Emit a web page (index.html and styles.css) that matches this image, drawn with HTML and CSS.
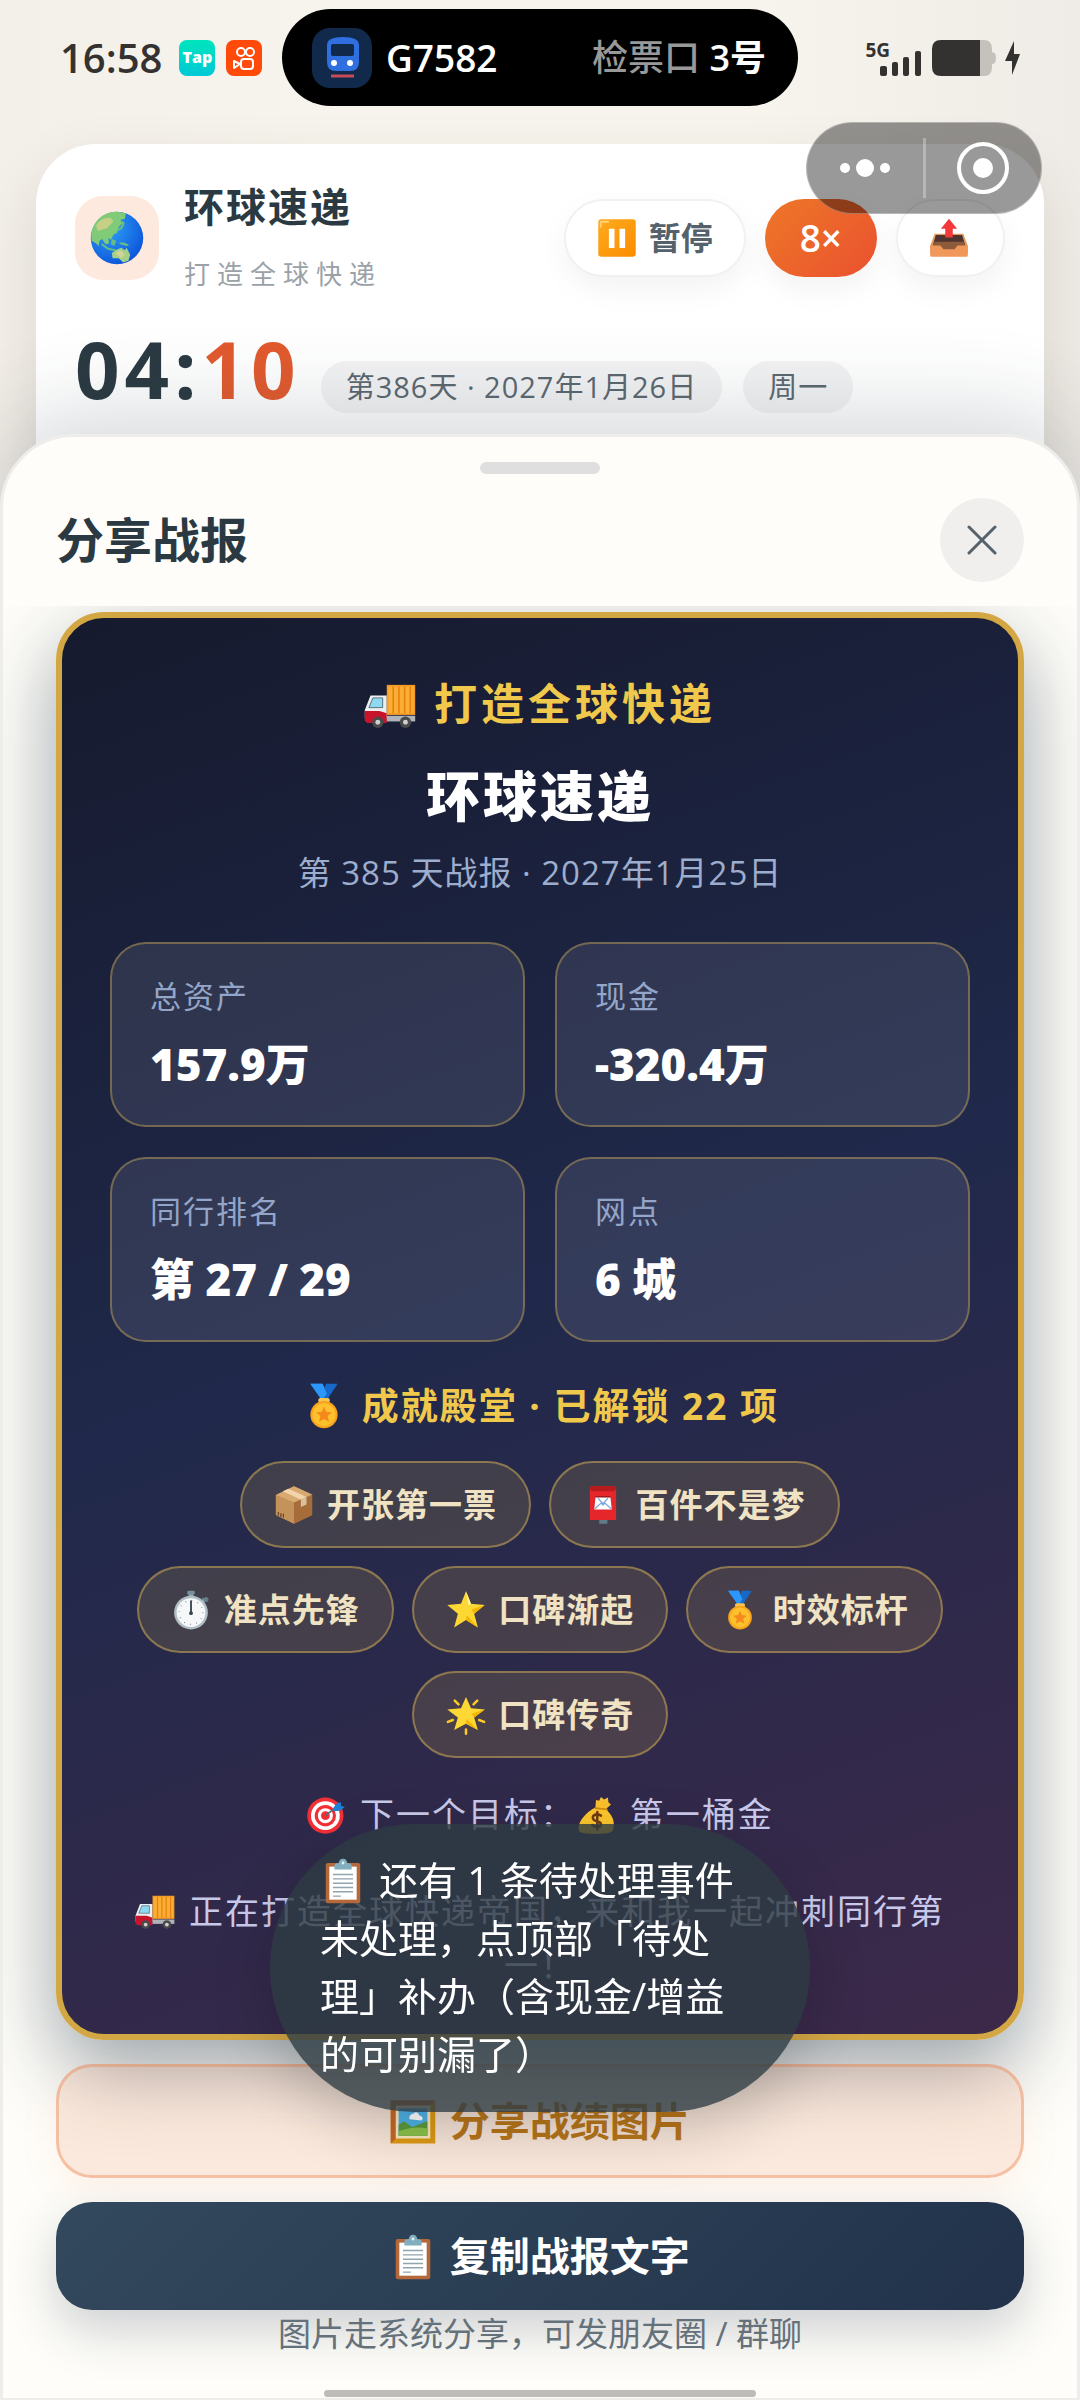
FILE: index.html
```html
<!DOCTYPE html>
<html lang="zh-CN">
<head>
    <meta charset="UTF-8">
    <meta name="viewport" content="width=device-width, initial-scale=1.0">
    <title>环球速递</title>
    <link rel="stylesheet" href="styles.css">
</head>
<body>
    <!-- shared icons -->
    <svg class="sprite" aria-hidden="true">
        <defs>
            <radialGradient id="sea" cx="35%" cy="30%" r="80%">
                <stop offset="0" stop-color="#2fa4f7"/>
                <stop offset="1" stop-color="#0a4fd8"/>
            </radialGradient>
            <linearGradient id="amber" x1="0" y1="0" x2="1" y2="1">
                <stop offset="0" stop-color="#ffab1f"/>
                <stop offset="1" stop-color="#fb8c00"/>
            </linearGradient>
        </defs>
        <symbol id="globe" viewBox="0 0 64 64">
            <circle cx="32" cy="32" r="30" fill="url(#sea)"/>
            <path d="M5 19C10 8 20 2 31 2c4 0 8 1 11 2l-1 6-5 1 2 4-4 4-2 7-4 2-3 6-3-2 1 6-4 1-4-6-3 2-1 6-3-3-5-3C2 29 3 23 5 19z" fill="#7fcb77"/>
            <path d="M8 18c4-7 10-10 17-9l3 4-8 8-10 3z" fill="#c5cf86"/>
            <path d="M38 12l3 3-3 6-4 3-1-2 4-4zM15 38l7 5 9 2-1 2-9-2-7-5zM34 37l6 0 6 3-3 1-7-2zM26 33l5 2-2 6-4-2z" fill="#67bd83"/>
            <path d="M26 49l6-4 5-2 4 3 2-3 4 8-2 7-6 2-5-5-7 0z" fill="#a5d08a"/>
            <path d="M30 49l6-3 5 5-4 4z" fill="#d2d394"/>
        </symbol>
        <symbol id="pause" viewBox="0 0 64 64">
            <rect x="2" y="2" width="60" height="60" rx="5" fill="url(#amber)"/>
            <path d="M6 14V8c0-1 1-2 2-2h10" fill="none" stroke="#ffd27a" stroke-width="3" stroke-linecap="round"/>
            <path d="M19 17h9v31h-9zM36 17h9v31h-9z" fill="#fff"/>
        </symbol>
        <symbol id="outbox" viewBox="0 0 64 64">
            <path d="M9 25h46l7 19v14H2V44z" fill="#e59a5e"/>
            <path d="M11 27h42l5 17H6z" fill="#4e342e"/>
            <path d="M9 38h46l3 6-13 1-4 6H23l-4-6-13-1z" fill="#8d5a3c"/>
            <path d="M2 44h16l5 6h18l5-6h16v16a2 2 0 0 1-2 2H4a2 2 0 0 1-2-2z" fill="#f0985a"/>
            <path d="M32 1l13 16h-7v14H26V17h-7z" fill="#f4373a"/>
        </symbol>
        <symbol id="truck" viewBox="0 0 64 64">
            <path d="M1 37l7-18h20v28H1z" fill="#eceff1"/>
            <path d="M1 38h18l9 3v12H4l-3-3z" fill="#c8142a"/>
            <path d="M6 34l5-12h12v12z" fill="#8fd8f2" stroke="#455a64" stroke-width="1"/>
            <path d="M28 44h35v7H28z" fill="#b0b4b8"/>
            <path d="M28 6h35v37H28z" fill="#f59a23"/>
            <path d="M30 8h31v33H30z" fill="#fbae34"/>
            <path d="M36 8v33M43 8v33M50 8v33M57 8v33" stroke="#e58212" stroke-width="2"/>
            <circle cx="17" cy="52" r="7" fill="#4a4a4a"/>
            <circle cx="17" cy="52" r="3" fill="#d0d0d0"/>
            <circle cx="51" cy="52" r="7" fill="#4a4a4a"/>
            <circle cx="51" cy="52" r="3" fill="#d0d0d0"/>
        </symbol>
        <symbol id="medal" viewBox="0 0 64 64">
            <path d="M13 1h17l8 19-8 5z" fill="#1e88f0"/>
            <path d="M51 1H35l-8 19 8 5z" fill="#1769c9"/>
            <path d="M13 1h17l6 14-7 9z" fill="#2c97fb"/>
            <rect x="24" y="21" width="16" height="7" rx="3" fill="#f6c453"/>
            <circle cx="32" cy="44" r="19" fill="#f9a21b"/>
            <circle cx="32" cy="44" r="16" fill="#ffc02e"/>
            <path d="M32 33l3 7 8 1-6 5 2 8-7-4-7 4 2-8-6-5 8-1z" fill="#f48a1c"/>
        </symbol>
        <symbol id="box" viewBox="0 0 64 64">
            <path d="M3 16L32 2l29 13v33L32 62 3 48z" fill="#b27a45"/>
            <path d="M3 16l29 12v34L3 48z" fill="#c4935c"/>
            <path d="M32 28l29-13v33L32 62z" fill="#a66c3a"/>
            <path d="M3 16L32 2l29 13-29 13z" fill="#d9a972"/>
            <path d="M14 10l9-4 29 13-9 4z" fill="#f3d5ad"/>
            <path d="M43 23l9-4v12l-9 4z" fill="#d9c1a0"/>
            <path d="M7 43l0 6M11 45l0 6M15 46l0 6" stroke="#6d4524" stroke-width="2"/>
        </symbol>
        <symbol id="postbox" viewBox="0 0 64 64">
            <path d="M26 54h13v8H26z" fill="#607d8b"/>
            <path d="M11 6q0-4 4-4h34q4 0 4 4v50H11z" fill="#e5262b"/>
            <path d="M11 6q0-4 4-4h34q4 0 4 4l-3 4H14z" fill="#b71c1c"/>
            <path d="M20 18h24v4H20z" fill="#8e1616"/>
            <path d="M20 20h24l2 19H18z" fill="#fff"/>
            <path d="M19 38l10-9 3 3 3-3 10 9M24 21l8 9 8-9" fill="none" stroke="#7aa7dc" stroke-width="2"/>
        </symbol>
        <symbol id="stopwatch" viewBox="0 0 64 64">
            <path d="M28 5h8v9h-8z" fill="#90a4ae"/>
            <rect x="26" y="1" width="12" height="6" rx="2" fill="#78909c"/>
            <path d="M50 12l6 5-5 5z" fill="#90a4ae"/>
            <circle cx="56" cy="15" r="4" fill="#607d8b"/>
            <circle cx="32" cy="36" r="27" fill="#b0bec5"/>
            <circle cx="32" cy="36" r="23" fill="#f5f7f8"/>
            <circle cx="32" cy="36" r="19" fill="none" stroke="#546e7a" stroke-width="2" stroke-dasharray="1 9"/>
            <path d="M32 18v19" stroke="#37474f" stroke-width="3" stroke-linecap="round"/>
            <circle cx="32" cy="37" r="3" fill="#37474f"/>
        </symbol>
        <symbol id="star" viewBox="0 0 64 64">
            <path d="M32 2l8 20 22 2-17 14 6 22-19-12-19 12 6-22L2 24l22-2z" fill="#fdd835"/>
            <path d="M32 2l8 20-4 3z" fill="#fff59d"/>
            <path d="M62 24L45 38l-4-7zM51 60L32 48l1-8z" fill="#f4b400"/>
        </symbol>
        <symbol id="glow" viewBox="0 0 64 64">
            <path d="M32 3l8 18 22 2-17 13 6 20-19-10-19 10 6-20L2 23l22-2z" fill="#fdd835"/>
            <path d="M62 23L45 36l-4-6zM51 56L32 46l1-8z" fill="#f4b400"/>
            <path d="M14 9l6 6M50 9l-6 6M3 43l8-3M61 43l-8-3M32 55v7" stroke="#ffca28" stroke-width="4" stroke-linecap="round"/>
        </symbol>
        <symbol id="target" viewBox="0 0 64 64">
            <circle cx="31" cy="33" r="29" fill="#f22f35"/>
            <circle cx="31" cy="33" r="23" fill="#fff"/>
            <circle cx="31" cy="33" r="17" fill="#f22f35"/>
            <circle cx="31" cy="33" r="12" fill="#fff"/>
            <circle cx="31" cy="33" r="7" fill="#f22f35"/>
            <path d="M31 33l18-14" stroke="#546e7a" stroke-width="3"/>
            <path d="M44 20l7-8 5 0 0 5 6 2-8 6-9 1z" fill="#1e7fd6"/>
        </symbol>
        <symbol id="money" viewBox="0 0 64 64">
            <path d="M31 20l1-12 5 1 3-6 5 4 6-3 1 8 4 3-9 8z" fill="#fbc02d"/>
            <path d="M31 20h17l3 6C59 34 62 43 60 54c-1 6-8 8-29 8S4 60 4 54c0-13 13-27 27-34z" fill="#fcc62d"/>
            <path d="M31 21l18 2" stroke="#d18a12" stroke-width="3" stroke-linecap="round"/>
            <path d="M40 33c-9-5-16 1-12 6 3 4 12 2 12 8 0 5-8 6-14 1M34 27v28" fill="none" stroke="#6d3b15" stroke-width="4" stroke-linecap="round"/>
        </symbol>
        <symbol id="clipboard" viewBox="0 0 64 64">
            <rect x="8" y="7" width="48" height="56" rx="3" fill="#b5693b"/>
            <path d="M13 12h38v46H13z" fill="#fff"/>
            <path d="M18 23h28M18 29h28M18 35h28M18 41h28M18 47h28M18 53h11" stroke="#90a4ae" stroke-width="2"/>
            <path d="M20 16v-6q1-3 6-3 1-6 6-6t6 6q5 0 6 3v6z" fill="#82aebf"/>
            <circle cx="32" cy="7" r="2" fill="#e8f1f4"/>
        </symbol>
        <symbol id="frame" viewBox="0 0 64 64">
            <path d="M1 2h62v60H1z" fill="#dd9a14"/>
            <path d="M1 2h62l-8 8H9v44l-8 8z" fill="#c5672a"/>
            <path d="M8 9h48v46H8z" fill="#fbe9c0"/>
            <path d="M12 13h40v38H12z" fill="#4fb3e8"/>
            <path d="M27 28q-1-7 6-8 5-4 8 3 7 2 3 7z" fill="#fff"/>
            <path d="M12 36l7-5 12 8 21-8v20H12z" fill="#5c9a3d"/>
            <path d="M12 45q20-8 40-4v10H12z" fill="#8bc34a"/>
        </symbol>
    </svg>

    <div class="status">
        <div class="status-left">
            <span class="time">16:58</span>
            <span class="app app-tap">Tap</span>
            <span class="app app-video">
                <svg viewBox="0 0 36 36" width="36" height="36" fill="none" stroke="#fff" stroke-width="2">
                    <circle cx="15" cy="12" r="4"/>
                    <circle cx="24" cy="12" r="4"/>
                    <rect x="15" y="19" width="12" height="10" rx="3"/>
                    <path d="M8 21l6 3-6 4z" stroke-linejoin="round"/>
                </svg>
            </span>
        </div>
        <div class="island">
            <svg class="train" viewBox="0 0 60 60">
                <rect width="60" height="60" rx="18" fill="#11294a"/>
                <path d="M15 17q0-8 16-8t16 8v17q0 9-9 9H24q-9 0-9-9z" fill="#2f6fe0"/>
                <rect x="19" y="16" width="23" height="12" rx="2" fill="#11294a"/>
                <circle cx="22" cy="35" r="3" fill="#fff"/>
                <circle cx="38" cy="35" r="3" fill="#fff"/>
                <path d="M19 48h23" stroke="#c94a5a" stroke-width="3"/>
            </svg>
            <span class="train-no">G7582</span>
            <span class="gate"><span class="gate-label">检票口</span> 3号</span>
        </div>
        <div class="status-right">
            <span class="net">5G</span>
            <svg class="signal" viewBox="0 0 42 36" width="42" height="36" fill="#343230">
                <rect x="0" y="26" width="7" height="10" rx="2"/>
                <rect x="12" y="22" width="6" height="14" rx="2"/>
                <rect x="23" y="17" width="6" height="19" rx="2"/>
                <rect x="35" y="11" width="6" height="25" rx="2"/>
            </svg>
            <svg viewBox="0 0 64 36" width="64" height="36">
                <path d="M48 0h4q8 0 8 9v3q4 0 4 6t-4 6v3q0 9-8 9h-4z" fill="#c5c2bd"/>
                <path d="M9 0h39v36H9q-9 0-9-9V9q0-9 9-9z" fill="#343230"/>
            </svg>
            <svg class="bolt" viewBox="0 0 15 34" width="15" height="34">
                <path d="M9 0v13h6L7 34V20H0z" fill="#343230"/>
            </svg>
        </div>
    </div>

    <div class="capsule">
        <button class="capsule-btn" type="button" aria-label="更多">
            <svg viewBox="0 0 50 20" width="50" height="20" fill="#fff">
                <circle cx="5" cy="10" r="5"/>
                <circle cx="25" cy="10" r="9"/>
                <circle cx="45" cy="10" r="5"/>
            </svg>
        </button>
        <button class="capsule-btn" type="button" aria-label="关闭小程序">
            <svg viewBox="0 0 52 52" width="52" height="52">
                <circle cx="26" cy="26" r="24" fill="none" stroke="#fff" stroke-width="4"/>
                <circle cx="26" cy="26" r="10" fill="#fff"/>
            </svg>
        </button>
    </div>

    <header class="top-card">
        <div class="brand-row">
            <div class="brand-icon"><svg width="56" height="56"><use href="#globe"/></svg></div>
            <div class="brand-text">
                <h1>环球速递</h1>
                <p>打造全球快递</p>
            </div>
            <div class="controls">
                <button class="ctrl" type="button"><svg class="emoji"><use href="#pause"/></svg> 暂停</button>
                <button class="ctrl ctrl-speed" type="button">8×</button>
                <button class="ctrl" type="button" aria-label="分享"><svg class="emoji"><use href="#outbox"/></svg></button>
            </div>
        </div>
        <div class="clock-row">
            <div class="clock">04:<span>10</span></div>
            <span class="date">第386天 · 2027年1月26日</span>
            <span class="date">周一</span>
        </div>
    </header>

    <section class="sheet">
        <div class="sheet-head">
            <div class="handle"></div>
            <div class="sheet-title">
                <h2>分享战报</h2>
                <button class="close" type="button" aria-label="关闭">
                    <svg viewBox="0 0 30 30" width="30" height="30"><path d="M2 2l26 26M28 2L2 28" stroke="#55626b" stroke-width="3" stroke-linecap="round"/></svg>
                </button>
            </div>
        </div>

        <div class="sheet-body">
            <article class="report">
                <p class="report-brand"><svg class="emoji emoji-lg"><use href="#truck"/></svg> 打造全球快递</p>
                <h3>环球速递</h3>
                <p class="report-day">第 385 天战报 · 2027年1月25日</p>

                <dl class="stats">
                    <div class="stat"><dt>总资产</dt><dd>157.9万</dd></div>
                    <div class="stat"><dt>现金</dt><dd>-320.4万</dd></div>
                    <div class="stat"><dt>同行排名</dt><dd>第 27 / 29</dd></div>
                    <div class="stat"><dt>网点</dt><dd>6 城</dd></div>
                </dl>

                <h4><svg class="emoji emoji-md"><use href="#medal"/></svg> 成就殿堂 · 已解锁 22 项</h4>
                <ul class="badges">
                    <li><svg class="emoji"><use href="#box"/></svg> 开张第一票</li>
                    <li><svg class="emoji"><use href="#postbox"/></svg> 百件不是梦</li>
                    <li><svg class="emoji"><use href="#stopwatch"/></svg> 准点先锋</li>
                    <li><svg class="emoji"><use href="#star"/></svg> 口碑渐起</li>
                    <li><svg class="emoji"><use href="#medal"/></svg> 时效标杆</li>
                    <li><svg class="emoji"><use href="#glow"/></svg> 口碑传奇</li>
                </ul>

                <p class="goal"><svg class="emoji"><use href="#target"/></svg> 下一个目标：<svg class="emoji"><use href="#money"/></svg> 第一桶金</p>
                <p class="slogan"><svg class="emoji"><use href="#truck"/></svg> 正在打造全球快递帝国，来和我一起冲刺同行第一！</p>
            </article>

            <button class="btn btn-image" type="button"><svg class="emoji emoji-md"><use href="#frame"/></svg> 分享战绩图片</button>
            <button class="btn btn-copy" type="button"><svg class="emoji emoji-md"><use href="#clipboard"/></svg> 复制战报文字</button>
            <p class="hint">图片走系统分享，可发朋友圈 / 群聊</p>
        </div>
    </section>

    <div class="toast" role="status"><svg class="emoji emoji-md"><use href="#clipboard"/></svg> 还有 1 条待处理事件未处理，点顶部「待处理」补办（含现金/增益的可别漏了）</div>
    <div class="home-bar"></div>
</body>
</html>
```

FILE: styles.css
```css
* {
    box-sizing: border-box;
    margin: 0;
    padding: 0;
}

body {
    position: relative;
    display: flex;
    flex-direction: column;
    min-height: 100vh;
    font-family: "Open Sans", "Noto Sans CJK SC", sans-serif;
    color: #2b3a42;
    background: linear-gradient(90deg, #f3efe9, #f7f4ed 30%, #f7f4ed 70%, #efebe6);
}

button {
    font-family: inherit;
    border: none;
    cursor: pointer;
}

.sprite {
    position: absolute;
    width: 0;
    height: 0;
}

.emoji {
    width: 40px;
    height: 40px;
    margin-right: 3px;
    vertical-align: -8px;
}

.emoji-md {
    width: 46px;
    height: 46px;
    vertical-align: -9px;
}

.emoji-lg {
    width: 52px;
    height: 52px;
    vertical-align: -12px;
}

/* status bar */
.status {
    display: grid;
    grid-template-columns: 1fr 516px 1fr;
    align-items: center;
    padding: 9px 60px 0;
}

.status-left,
.status-right {
    display: flex;
    align-items: center;
    color: #343230;
}

.time {
    margin-right: 17px;
    font-size: 40px;
    font-weight: 600;
    line-height: 48px;
}

.app {
    width: 36px;
    height: 36px;
    margin-right: 11px;
    border-radius: 8px;
}

.app-tap {
    background: linear-gradient(#00e5bd, #00c9d6);
    color: #fff;
    font-size: 16px;
    font-weight: 800;
    line-height: 34px;
    text-align: center;
}

.app-video {
    background: #ff4a0a;
}

.island {
    display: flex;
    align-items: center;
    height: 97px;
    padding: 0 32px 0 30px;
    border-radius: 50px;
    background: #000;
    color: #fff;
    font-size: 37px;
    font-weight: 600;
    line-height: 48px;
}

.train {
    width: 60px;
    height: 60px;
    margin-right: 14px;
}

.gate {
    margin-left: auto;
    font-size: 36px;
}

.gate-label {
    color: #999;
    font-weight: 500;
}

.status-right {
    justify-content: flex-end;
}

.net {
    align-self: flex-start;
    margin-right: -10px;
    font-size: 19px;
    font-weight: 700;
    line-height: 20px;
}

.signal {
    margin-right: 10px;
}

.bolt {
    margin-left: 9px;
}

/* mini program capsule */
.capsule {
    position: absolute;
    top: 122px;
    right: 38px;
    z-index: 2;
    display: flex;
    align-items: center;
    width: 236px;
    height: 92px;
    border: 1px solid rgba(255, 255, 255, 0.3);
    border-radius: 46px;
    background: rgba(0, 0, 0, 0.4);
}

.capsule-btn {
    display: flex;
    flex: 1;
    align-items: center;
    justify-content: center;
    height: 60px;
    background: none;
}

.capsule-btn + .capsule-btn {
    border-left: 3px solid rgba(255, 255, 255, 0.3);
}

/* header card */
.top-card {
    margin: 38px 36px 0;
    padding: 38px 39px 100px;
    border-radius: 60px 60px 0 0;
    background: #fff;
    box-shadow: 0 24px 60px rgba(60, 50, 30, 0.12);
}

.brand-row {
    display: flex;
    align-items: center;
}

.brand-icon {
    display: flex;
    align-items: center;
    justify-content: center;
    width: 84px;
    height: 84px;
    margin-right: 25px;
    border-radius: 28px;
    background: #fde9de;
}

.brand-text h1 {
    margin-bottom: 22px;
    font-size: 40px;
    letter-spacing: 2px;
    line-height: 50px;
}

.brand-text p {
    color: #9aa2a8;
    font-size: 26px;
    letter-spacing: 7px;
    line-height: 40px;
}

.controls {
    display: flex;
    gap: 19px;
    margin-left: auto;
}

.ctrl {
    height: 78px;
    padding: 0 31px;
    border: 2px solid #f1f1f1;
    border-radius: 39px;
    background: #fff;
    color: #55626b;
    font-size: 32px;
    font-weight: 700;
    line-height: 48px;
    box-shadow: 0 12px 30px rgba(0, 0, 0, 0.05);
}

.ctrl-speed {
    padding: 0 35px;
    border: none;
    background: linear-gradient(135deg, #ee7727, #ea5130);
    color: #fff;
    font-size: 37px;
    font-weight: 600;
}

.clock-row {
    display: flex;
    align-items: flex-end;
    margin-top: 31px;
}

.clock {
    margin-right: 20px;
    font-size: 78px;
    font-weight: 700;
    letter-spacing: 5px;
    line-height: 88px;
}

.clock span {
    color: #e25a2e;
}

.date {
    margin-right: 21px;
    padding: 0 25px;
    border-radius: 26px;
    background: rgba(43, 58, 66, 0.06);
    color: #5c6870;
    font-size: 29px;
    letter-spacing: 1px;
    line-height: 52px;
}

/* bottom sheet */
.sheet {
    position: relative;
    display: flex;
    flex: 1;
    flex-direction: column;
    margin-top: -79px;
    border: 3px solid #eeedeb;
    border-radius: 74px 74px 0 0;
    background: #fefdf9;
    box-shadow: 0 -20px 90px rgba(45, 58, 68, 0.2);
}

.sheet-head {
    padding: 25px 53px 24px;
}

.handle {
    width: 120px;
    height: 12px;
    margin: 0 auto 24px;
    border-radius: 6px;
    background: #dfdfdf;
}

.sheet-title {
    display: flex;
    align-items: center;
    justify-content: space-between;
}

.sheet-title h2 {
    font-size: 48px;
    line-height: 60px;
}

.close {
    display: flex;
    align-items: center;
    justify-content: center;
    width: 84px;
    height: 84px;
    border-radius: 50%;
    background: #f1efee;
}

.sheet-body {
    flex: 1;
    padding: 6px 53px 42px;
    overflow: hidden;
}

.report {
    padding: 56px 48px 42px;
    border: 6px solid #d4a745;
    border-radius: 48px;
    background: linear-gradient(160deg, #161a2e, #20294b 48%, #3d294a);
    text-align: center;
    box-shadow: 0 30px 80px rgba(20, 40, 60, 0.42);
}

.report-brand {
    color: #f0c84c;
    font-size: 43px;
    font-weight: 700;
    letter-spacing: 4px;
    line-height: 60px;
}

.report h3 {
    margin-top: 26px;
    color: #fff;
    font-size: 54px;
    font-weight: 900;
    letter-spacing: 3px;
    line-height: 72px;
}

.report-day {
    margin-top: 17px;
    color: #9dadcd;
    font-size: 33px;
    letter-spacing: 1px;
    line-height: 48px;
}

.stats {
    display: grid;
    grid-template-columns: 1fr 1fr;
    gap: 30px;
    margin-top: 45px;
    text-align: left;
}

.stat {
    padding: 31px 38px 33px;
    border: 2px solid rgba(212, 175, 85, 0.42);
    border-radius: 36px;
    background: rgba(255, 255, 255, 0.09);
}

.stat dt {
    color: #93a5c8;
    font-size: 31px;
    letter-spacing: 2px;
    line-height: 42px;
}

.stat dd {
    margin-top: 19px;
    color: #fff;
    font-size: 44px;
    font-weight: 800;
    line-height: 56px;
}

.report h4 {
    margin-top: 40px;
    color: #f0c84c;
    font-size: 37px;
    letter-spacing: 2px;
    line-height: 48px;
}

.badges {
    display: flex;
    flex-wrap: wrap;
    justify-content: center;
    gap: 18px;
    margin-top: 31px;
    list-style: none;
}

.badges li {
    padding: 18px 32px;
    border: 2px solid rgba(212, 175, 85, 0.5);
    border-radius: 44px;
    background: rgba(240, 200, 76, 0.14);
    color: #efe3c4;
    font-size: 33px;
    font-weight: 600;
    letter-spacing: 1px;
    line-height: 47px;
}

.goal,
.slogan {
    color: #c8c8ea;
    font-size: 34px;
    letter-spacing: 2px;
    line-height: 54px;
}

.goal {
    margin-top: 29px;
}

.slogan {
    margin-top: 43px;
}

.btn {
    display: block;
    width: 100%;
    margin-top: 24px;
    border-radius: 36px;
    font-size: 40px;
    font-weight: 700;
    line-height: 60px;
}

.btn-image {
    padding: 24px 0;
    border: 3px solid rgba(235, 130, 75, 0.4);
    background: rgba(240, 120, 60, 0.15);
    color: #b8761a;
    box-shadow: 0 12px 36px rgba(255, 150, 90, 0.1);
}

.btn-copy {
    padding: 24px 0;
    background: linear-gradient(135deg, #33495d, #21324a);
    color: #fff;
    box-shadow: 0 20px 50px rgba(33, 50, 74, 0.22);
}

.hint {
    margin-top: 2px;
    color: #65717a;
    font-size: 33px;
    line-height: 44px;
    text-align: center;
}

.toast {
    position: fixed;
    bottom: 288px;
    left: 50%;
    width: 540px;
    padding: 27px 50px 29px;
    border-radius: 144px;
    background: rgba(45, 59, 67, 0.81);
    color: #fff;
    font-size: 39px;
    line-height: 58px;
    transform: translateX(-50%);
    box-shadow: 0 20px 60px rgba(0, 0, 0, 0.18);
}

.home-bar {
    position: fixed;
    bottom: 3px;
    left: 30%;
    width: 40%;
    height: 7px;
    border-radius: 4px;
    background: #bdbcb8;
}
```
